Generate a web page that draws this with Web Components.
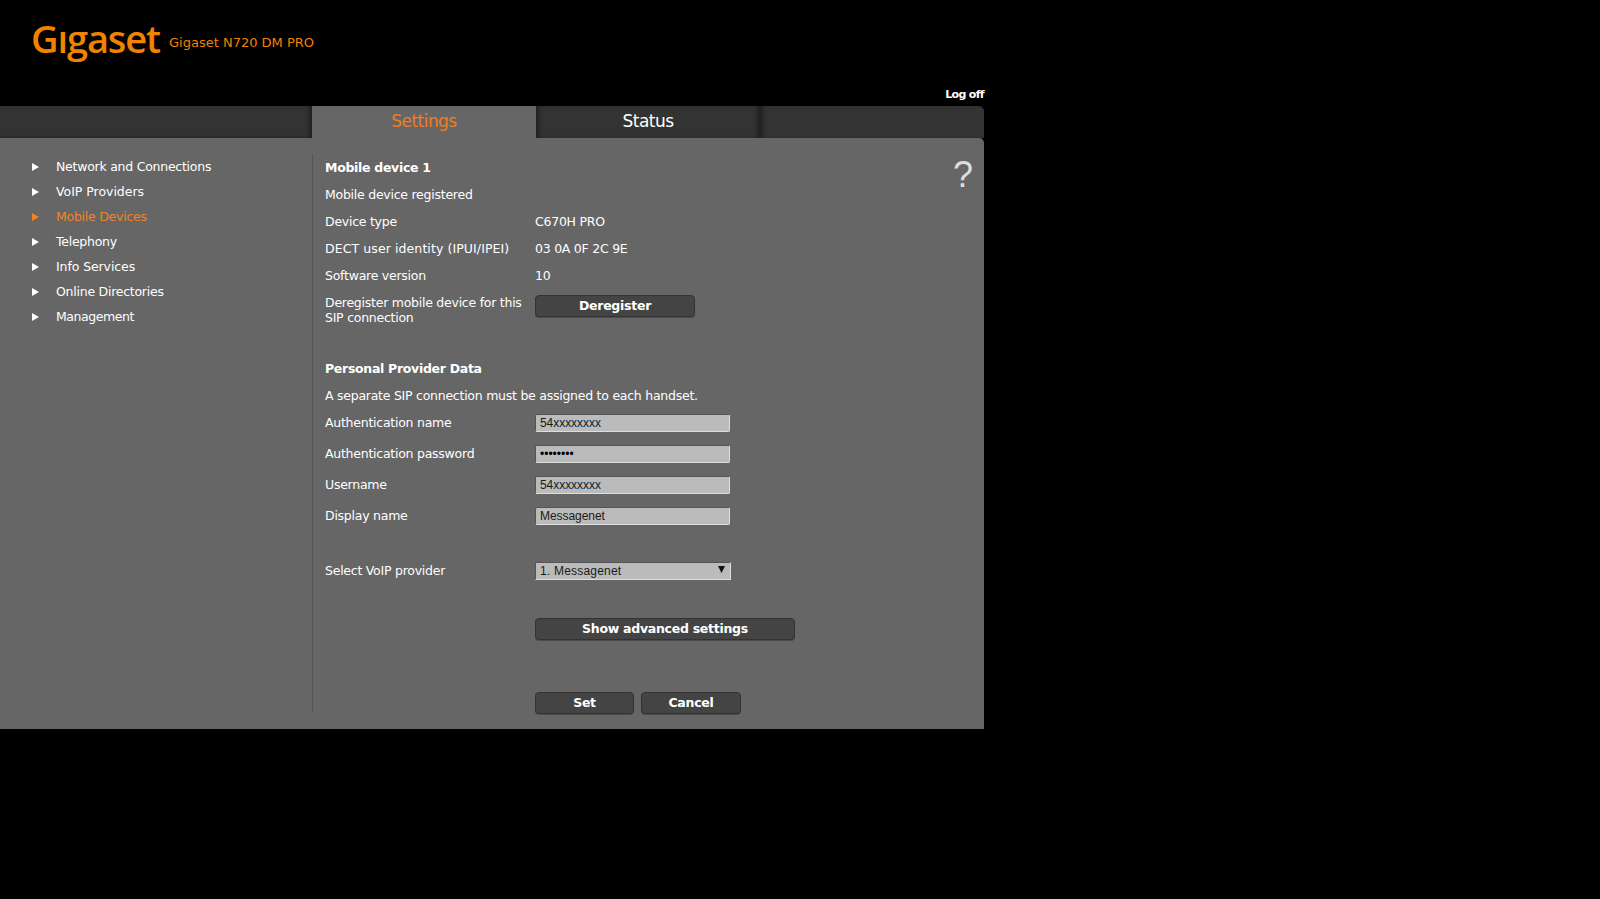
<!DOCTYPE html>
<html lang="en"><head><meta charset="utf-8"><title>Gigaset N720 DM PRO</title>
<style>
html,body{margin:0;padding:0;background:#000;height:100%;overflow:hidden}
body{font:12.5px "DejaVu Sans","Liberation Sans",sans-serif;color:#fff}
#page{width:984px}
</style></head><body>
<div id="page">
  <gs-header model="Gigaset N720 DM PRO"></gs-header>
  <gs-tabs>
    <gs-tab active>Settings</gs-tab>
    <gs-tab>Status</gs-tab>
  </gs-tabs>
  <gs-panel>
    <gs-nav slot="nav">
      <gs-nav-item>Network and Connections</gs-nav-item>
      <gs-nav-item style="letter-spacing:-.03px">VoIP Providers</gs-nav-item>
      <gs-nav-item active>Mobile Devices</gs-nav-item>
      <gs-nav-item>Telephony</gs-nav-item>
      <gs-nav-item style="letter-spacing:-.1px">Info Services</gs-nav-item>
      <gs-nav-item>Online Directories</gs-nav-item>
      <gs-nav-item style="letter-spacing:-.45px">Management</gs-nav-item>
    </gs-nav>
    <gs-row heading>Mobile device 1</gs-row>
    <gs-row>Mobile device registered</gs-row>
    <gs-row label="Device type">C670H PRO</gs-row>
    <gs-row label="DECT user identity (IPUI/IPEI)" style="letter-spacing:.09px"><span style="letter-spacing:-.25px">03 0A 0F 2C 9E</span></gs-row>
    <gs-row label="Software version">10</gs-row>
    <gs-row tall label="Deregister mobile device for this SIP connection"><gs-button width="160">Deregister</gs-button></gs-row>
    <gs-row heading style="margin-top:22px">Personal Provider Data</gs-row>
    <gs-row style="margin-bottom:-2px">A separate SIP connection must be assigned to each handset.</gs-row>
    <gs-row field label="Authentication name"><gs-input>54xxxxxxxx</gs-input></gs-row>
    <gs-row field label="Authentication password"><gs-input secret>••••••••</gs-input></gs-row>
    <gs-row field label="Username"><gs-input>54xxxxxxxx</gs-input></gs-row>
    <gs-row field label="Display name"><gs-input>Messagenet</gs-input></gs-row>
    <gs-row label="Select VoIP provider" style="margin-top:26px"><gs-select>1. Messagenet</gs-select></gs-row>
    <gs-row label="" style="margin-top:31px"><gs-button width="260">Show advanced settings</gs-button></gs-row>
    <gs-row label="" style="margin-top:47px"><gs-button width="99">Set</gs-button><gs-button width="100" style="margin-left:7px">Cancel</gs-button></gs-row>
  </gs-panel>
</div>
<script>
function def(name,html,init){
  customElements.define(name,class extends HTMLElement{
    connectedCallback(){
      if(this.shadowRoot)return;
      const r=this.attachShadow({mode:'open'});
      r.innerHTML=html;
      if(init)init(this,r);
    }
  });
}
def('gs-header',`<style>
:host{display:block;position:relative;height:106px;background:#000}
.top{display:flex;align-items:baseline;padding:12px 0 0 31px;height:66px;box-sizing:border-box}
.logo{font:600 38px/52px "Open Sans",Lato,sans-serif;color:#f08300;letter-spacing:-1.1px}
.model{margin-left:9px;font:13px "DejaVu Sans",sans-serif;color:#f08300;position:relative;top:-6px}
.off{display:block;text-align:right;margin-top:22px;font:bold 11px/14px "DejaVu Sans",sans-serif;letter-spacing:-.65px;color:#fff}
</style><div class="top"><span class="logo">Gıgaset</span><span class="model"></span></div><span class="off">Log off</span>`,
(h,r)=>{r.querySelector('.model').textContent=h.getAttribute('model')});
def('gs-tabs',`<style>
:host{display:flex;height:32px;background:#333;border-top-right-radius:5px;overflow:hidden}
.lead{width:312px;box-shadow:inset -5px 0 5px -3px #1c1c1c,inset 0 -3px 3px -3px #222}
.rest{flex:1;box-shadow:inset 5px 0 5px -3px #1c1c1c}
::slotted(gs-tab){flex:none}
</style><div class="lead"></div><slot></slot><div class="rest"></div>`);
def('gs-tab',`<style>
:host{display:block;width:224px;height:32px;box-sizing:border-box;text-align:center;font:17px/30px "DejaVu Sans",sans-serif;letter-spacing:-.55px;color:#fff;background:#333;box-shadow:inset 5px 0 5px -3px #1c1c1c,inset -5px 0 5px -3px #1c1c1c}
:host([active]){background:#666;color:#f07d1a;box-shadow:none}
</style><slot></slot>`);
def('gs-panel',`<style>
:host{display:grid;grid-template-columns:312px 1fr;grid-template-rows:minmax(0,1fr);position:relative;height:591px;background:#666;border-top-right-radius:5px}
.main{position:relative;margin:16px 0 17px;border-left:1px solid #555;padding-left:12px}
.help{position:absolute;top:18px;right:11px;font:36px/38px "Liberation Sans",sans-serif;color:#ddd}
</style><slot name="nav"></slot><div class="main"><slot></slot></div><span class="help">?</span>`);
def('gs-nav',`<style>:host{display:block;padding:16px 0 0 32px}</style><slot></slot>`);
def('gs-nav-item',`<style>
:host{display:flex;align-items:center;height:25px;font-size:12.5px;letter-spacing:-.25px;color:#fff}
:host([active]){color:#f58220}
svg{width:7px;height:8px;margin-right:17px;flex:none;fill:currentColor}
</style><svg viewBox="0 0 7 8"><path d="M0 0L7 4L0 8Z"/></svg><slot></slot>`);
def('gs-row',`<style>
:host{display:flex;align-items:center;min-height:27px;letter-spacing:-.25px}
:host([heading]){font-weight:bold;letter-spacing:-.3px}
:host([field]){min-height:31px}
:host([tall]){align-items:flex-start;padding:6px 0 8px;line-height:15px}
.l{width:210px;flex:none;padding-right:4px;box-sizing:border-box}
:host(:not([label])) .l{display:none}
</style><div class="l"></div><slot></slot>`,
(h,r)=>{r.querySelector('.l').textContent=h.getAttribute('label')||''});
def('gs-button',`<style>
:host{display:block;box-sizing:border-box;height:22px;background:#444;border:1px solid #333;border-radius:4px;box-shadow:0 1px 0 #4c4c4c;text-align:center;font:bold 12.5px/19px "DejaVu Sans",sans-serif;letter-spacing:-.27px;color:#fff}
</style><slot></slot>`,
(h)=>{h.style.width=h.getAttribute('width')+'px'});
def('gs-input',`<style>
:host{display:block;box-sizing:border-box;width:195px;height:18px;padding-left:4px;background:#bbb;border:1px solid;border-color:#555 #ddd #ddd #555;border-radius:2px;font:12px/16px "Liberation Sans",sans-serif;letter-spacing:-.05px;color:#1a1a1a}
:host([secret]){letter-spacing:0;color:#000}
</style><slot></slot>`);
def('gs-select',`<style>
:host{display:flex;justify-content:space-between;align-items:center;box-sizing:border-box;width:196px;height:18px;padding:0 5px 0 4px;background:#bbb;border:1px solid;border-color:#555 #ddd #ddd #555;font:12px/16px "Liberation Sans",sans-serif;letter-spacing:.2px;color:#1a1a1a}
svg{width:7px;height:7px;fill:#111;margin-top:-2px}
</style><span><slot></slot></span><svg viewBox="0 0 7 7"><path d="M0 0H7L3.5 7Z"/></svg>`);
</script>
</body></html>
